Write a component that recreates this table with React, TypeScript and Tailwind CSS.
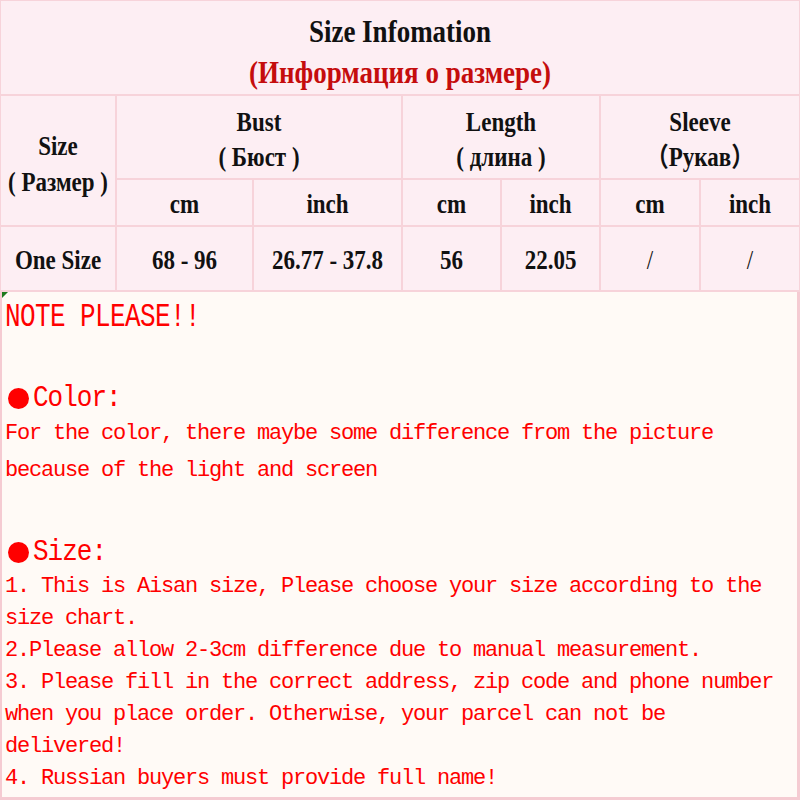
import React from 'react';

// Size chart + notes, one static card
const cellFont = { fontFamily: '"Liberation Serif", "Times New Roman", "Noto Sans CJK SC", serif' };
const noteFont = { fontFamily: '"Liberation Mono", "Courier New", monospace' };

function Cell({ children, className = '' }: any) {
  return (
    <div className={`bg-[#fdeef3] flex flex-col items-center justify-center text-[23px] font-bold text-[#111] ${className}`}>
      <div className="flex flex-col items-center scale-y-115">{children}</div>
    </div>
  );
}

function Line({ children, h = 'h-[32px] leading-[32px]' }: any) {
  return <div className={`${h} whitespace-pre text-[22px] tracking-[-1.2px]`}>{children}</div>;
}

function Heading({ label, h }: any) {
  return (
    <div className={`${h} flex items-center text-[26px] tracking-[-1px]`}>
      <span className="inline-block w-[21px] h-[21px] rounded-full bg-[#ff0000] ml-[3px] mr-[4px]" />
      <span className="inline-block scale-y-110">{label}</span>
    </div>
  );
}

export default function App() {
  return (
    <div className="w-[800px] h-[800px] overflow-hidden bg-white">
      {/* Table */}
      <div
        style={cellFont}
        className="grid grid-cols-[114px_135px_147px_97px_97px_98px_98px] grid-rows-[93px_82px_45px_63px] gap-[2px] p-[1px] pb-[2px] bg-[#f7d3da]"
      >
        <Cell className="col-span-7 pt-[8px] text-[27px] leading-[36px]">
          <div>Size Infomation</div>
          <div className="text-[#c50d0d]">(Информация о размере)</div>
        </Cell>

        <Cell className="row-span-2 leading-[32px] pt-[8px]">
          <div>Size</div>
          <div>( Размер )</div>
        </Cell>
        <Cell className="col-span-2 pt-[6px] leading-[31px]">
          <div>Bust</div>
          <div>( Бюст )</div>
        </Cell>
        <Cell className="col-span-2 pt-[6px] leading-[31px]">
          <div>Length</div>
          <div>( длина )</div>
        </Cell>
        <Cell className="col-span-2 pt-[6px] leading-[31px]">
          <div>Sleeve</div>
          <div>（Рукав）</div>
        </Cell>

        <Cell className="pt-[6px]">cm</Cell>
        <Cell className="pt-[6px]">inch</Cell>
        <Cell className="pt-[6px]">cm</Cell>
        <Cell className="pt-[6px]">inch</Cell>
        <Cell className="pt-[6px]">cm</Cell>
        <Cell className="pt-[6px]">inch</Cell>

        <Cell className="pt-[6px]">One Size</Cell>
        <Cell className="pt-[6px]">68 - 96</Cell>
        <Cell className="pt-[6px]">26.77 - 37.8</Cell>
        <Cell className="pt-[6px]">56</Cell>
        <Cell className="pt-[6px]">22.05</Cell>
        <Cell className="pt-[6px] font-normal">/</Cell>
        <Cell className="pt-[6px] font-normal">/</Cell>
      </div>

      {/* Notes */}
      <div
        style={noteFont}
        className="relative h-[508px] bg-[#fffaf6] border-l-[2px] border-r-[3px] border-b-[3px] border-[#f5cbd2] pl-[3px] pt-[9px] text-[#ff0000]"
      >
        <svg className="absolute left-0 top-0" width="6" height="6" viewBox="0 0 6 6">
          <path d="M0 0 L6 0 L0 6 Z" fill="#1e7a1e" />
        </svg>

        <div className="h-[32px] leading-[32px] whitespace-pre text-[26px] tracking-[-0.6px] scale-y-125 origin-left">NOTE PLEASE!!</div>
        <div className="h-[47px]" />

        <Heading label="Color:" h="h-[36px]" />
        <Line h="h-[36px] leading-[36px]">For the color, there maybe some difference from the picture</Line>
        <Line h="h-[38px] leading-[38px]">because of the light and screen</Line>
        <div className="h-[43px]" />

        <Heading label="Size:" h="h-[38px]" />
        <Line>1. This is Aisan size, Please choose your size according to the</Line>
        <Line>size chart.</Line>
        <Line>2.Please allow 2-3cm difference due to manual measurement.</Line>
        <Line>3. Please fill in the correct address, zip code and phone number</Line>
        <Line>when you place order. Otherwise, your parcel can not be</Line>
        <Line>delivered!</Line>
        <Line>4. Russian buyers must provide full name!</Line>
      </div>
    </div>
  );
}
